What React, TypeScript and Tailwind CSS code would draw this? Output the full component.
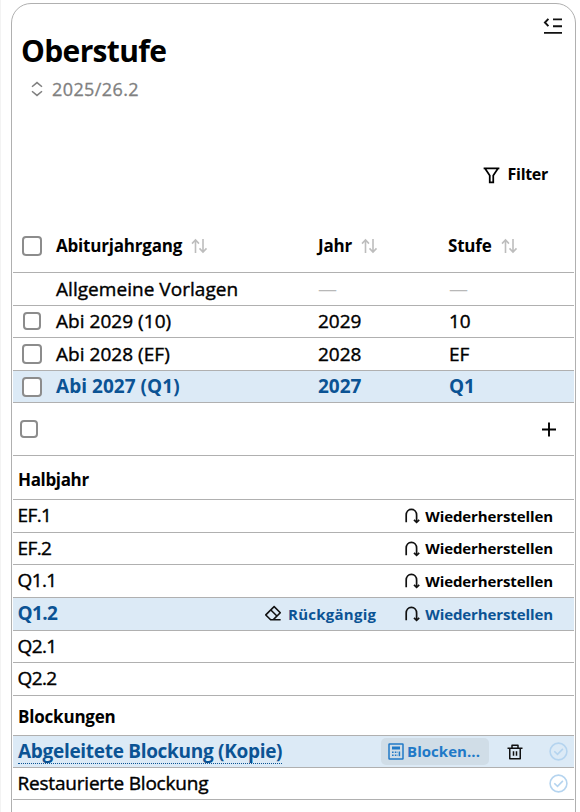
import * as React from 'react'
import { RiDeleteBinLine, RiEraserLine, RiFilterLine } from 'react-icons/ri'
import { clsx } from 'clsx'

const jahrgaenge = [
  { name: 'Allgemeine Vorlagen', height: 'h-[33px]' },
  { name: 'Abi 2029 (10)', jahr: '2029', stufe: '10', height: 'h-8', small: true },
  { name: 'Abi 2028 (EF)', jahr: '2028', stufe: 'EF', height: 'h-[33px]' },
  { name: 'Abi 2027 (Q1)', jahr: '2027', stufe: 'Q1', height: 'h-8', active: true },
]

const halbjahre = [
  { name: 'EF.1', restore: true, height: 'h-[33px]' },
  { name: 'EF.2', restore: true, height: 'h-8' },
  { name: 'Q1.1', restore: true, height: 'h-[33px]' },
  { name: 'Q1.2', restore: true, height: 'h-[33px]', active: true },
  { name: 'Q2.1', height: 'h-8' },
  { name: 'Q2.2', height: 'h-[33px]' },
]

function Checkbox({ className }: { className?: string }) {
  return (
    <span
      role="checkbox"
      aria-checked="false"
      className={clsx('block shrink-0 rounded-[4px] border-2 border-[#8c8c8c] bg-white', className)}
    />
  )
}

function SortIcon() {
  return (
    <svg width="18" height="16" viewBox="0 0 18 16" fill="none" stroke="#bdbdbd" strokeWidth="1.6">
      <path d="M4.5 15V2M1 5.6L4.5 2L8 5.6" />
      <path d="M12 1V14M8.5 10.4L12 14L15.5 10.4" />
    </svg>
  )
}

function RestoreIcon() {
  return (
    <svg width="17" height="17" viewBox="0 0 17 17" fill="none" stroke="#111" strokeWidth="1.7">
      <path d="M2.2 15.2V8C2.2 4.8 4.3 2.4 7.4 2.4S12.6 4.8 12.6 8V14.6" />
      <path d="M10 12.8L12.6 15.4L15.2 12.8" />
    </svg>
  )
}

function CheckIcon() {
  return (
    <svg className="shrink-0" width="19" height="19" viewBox="0 0 19 19" fill="none" stroke="#b5d4ef" strokeWidth="1.6">
      <circle cx="9.5" cy="9.5" r="8.4" />
      <path d="M5.3 9.2L8.5 12.3L13.9 6.9" />
    </svg>
  )
}

function CalculatorIcon() {
  return (
    <svg width="16" height="17" viewBox="0 0 16 17" fill="none" stroke="#2079c7" strokeWidth="1.5">
      <rect x="1" y="1" width="14" height="15" rx="0.5" />
      <path d="M4 5H12" strokeWidth="3" />
      <path d="M4 9.3H10M4 12.3H10" strokeWidth="1.6" strokeDasharray="1.6 1.2" />
      <path d="M11.4 8.5V13.2" strokeWidth="1.5" />
    </svg>
  )
}

function RestoreButton() {
  return (
    <button className="flex items-center gap-1 text-[15px] leading-5 font-bold tracking-[-0.1px] [-webkit-text-stroke:0]">
      <RestoreIcon />
      <span>Wiederherstellen</span>
    </button>
  )
}

export default function App() {
  return (
    <div className="h-[812px] overflow-hidden border-l border-[#f3f3f3] bg-white pt-[3px] pr-1 pl-[10px] font-['Open_Sans','Noto_Sans',sans-serif] text-black">
      <div className="h-[840px] rounded-[20px] border border-[#b0b0b0] px-px text-[19px]">
        <header className="flex h-[216px] flex-col">
          <div className="flex justify-between pr-[11px] pl-2">
            <div className="pt-[26px]">
              <h1 className="text-[30px] leading-[42px] font-bold tracking-[-0.65px]">Oberstufe</h1>
              <div className="mt-[5px] flex items-center gap-2 pl-[9px] text-[18px] leading-6 tracking-[0.4px] text-[#808080] [-webkit-text-stroke:0.3px]">
                <svg width="14" height="16" viewBox="0 0 14 16" fill="none" stroke="#808080" strokeWidth="1.5">
                  <path d="M2 5.8L7 1.6L12 5.8M2 10.2L7 14.4L12 10.2" />
                </svg>
                <span>2025/26.2</span>
              </div>
            </div>
            <svg className="mt-[13px]" width="20" height="18" viewBox="0 0 20 18" fill="none" stroke="#111" strokeWidth="1.9">
              <path d="M5.4 1.8L1.9 5.5L5.4 9.2M10 2.4H19M10 9.2H19M1 15.9H19" />
            </svg>
          </div>
          <div className="mt-[61px] flex items-center justify-end gap-1.5 pr-[26px] text-[16px] leading-6 font-bold tracking-[-0.3px]">
            <RiFilterLine className="size-[21px]" />
            <span>Filter</span>
          </div>
        </header>

        <div className="flex h-[53px] items-center border-b border-[#b0b0b0] pl-[9px] text-[17px] font-bold tracking-[-0.2px]">
          <Checkbox className="mr-[14px] size-5" />
          <div className="flex w-[262px] items-center gap-[9px]">
            <span>Abiturjahrgang</span>
            <SortIcon />
          </div>
          <div className="flex w-[130px] items-center gap-[9px]">
            <span>Jahr</span>
            <SortIcon />
          </div>
          <div className="flex items-center gap-[9px]">
            <span>Stufe</span>
            <SortIcon />
          </div>
        </div>
        {jahrgaenge.map((j) => (
          <div
            key={j.name}
            className={clsx(
              'flex items-center border-b border-[#b0b0b0] pl-[9px]',
              j.height,
              j.active ? 'bg-[#dceaf6] font-bold text-[#0b5394]' : '[-webkit-text-stroke:0.4px]'
            )}
          >
            <span className="w-[34px]">
              {j.jahr && <Checkbox className={j.small ? 'mb-0.5 ml-px size-[18px]' : 'size-5'} />}
            </span>
            <span className="w-[262px] tracking-[0.04px]">{j.name}</span>
            <span className={clsx('w-[131px]', !j.jahr && 'text-[#b8b8b8] [-webkit-text-stroke:0]')}>{j.jahr ?? '—'}</span>
            <span className={clsx(!j.stufe && 'text-[#b8b8b8] [-webkit-text-stroke:0]')}>{j.stufe ?? '—'}</span>
          </div>
        ))}
        <div className="flex h-[53px] items-center justify-between border-b border-[#b0b0b0] pr-[18px] pl-[7px]">
          <Checkbox className="size-[18px]" />
          <svg width="15" height="15" viewBox="0 0 15 15" stroke="#000" strokeWidth="1.9">
            <path d="M8 0.5V14.5M1 7.5H15" />
          </svg>
        </div>

        <div className="flex h-11 items-center border-b border-[#b0b0b0] pt-[5px] pl-[5px] text-[17px] font-bold tracking-[-0.35px]">
          Halbjahr
        </div>
        {halbjahre.map((h) => (
          <div
            key={h.name}
            className={clsx(
              'flex items-center border-b border-[#b0b0b0] pr-[21px] pb-px pl-[4.5px] tracking-[-0.6px]',
              h.height,
              h.active ? 'bg-[#dceaf6] font-bold text-[#0b5394]' : '[-webkit-text-stroke:0.4px]'
            )}
          >
            <span className="grow">{h.name}</span>
            {h.active && (
              <button className="mr-7 flex items-center gap-[5px] text-[15px] leading-5 font-bold tracking-[0.25px]">
                <RiEraserLine className="size-[19px] text-[#111]" />
                <span>Rückgängig</span>
              </button>
            )}
            {h.restore && <RestoreButton />}
          </div>
        ))}

        <div className="flex h-10 items-center border-b border-[#b0b0b0] pt-[3px] pl-[5px] text-[17px] font-bold tracking-[-0.2px]">
          Blockungen
        </div>
        <div className="flex h-8 items-center border-b border-[#b0b0b0] bg-[#dceaf6] pr-1.5 pl-[5px] font-bold text-[#0b5394]">
          <span className="border-b border-dotted border-[#0b5394] leading-6 tracking-[-0.3px]">Abgeleitete Blockung (Kopie)</span>
          <button className="mr-[17px] ml-auto flex h-[27px] w-[108px] items-center gap-[3px] rounded-[5px] bg-[#d0dde7] pl-[7px] text-[15px] tracking-[0.05px] text-[#2079c7]">
            <CalculatorIcon />
            <span>Blocken...</span>
          </button>
          <RiDeleteBinLine className="mr-[25px] size-[18px] text-[#111]" />
          <CheckIcon />
        </div>
        <div className="flex h-8 items-center justify-between border-b border-[#b0b0b0] pr-1.5 pl-[4.5px] [-webkit-text-stroke:0.4px]">
          <span className="tracking-[-0.2px]">Restaurierte Blockung</span>
          <CheckIcon />
        </div>
      </div>
    </div>
  )
}
